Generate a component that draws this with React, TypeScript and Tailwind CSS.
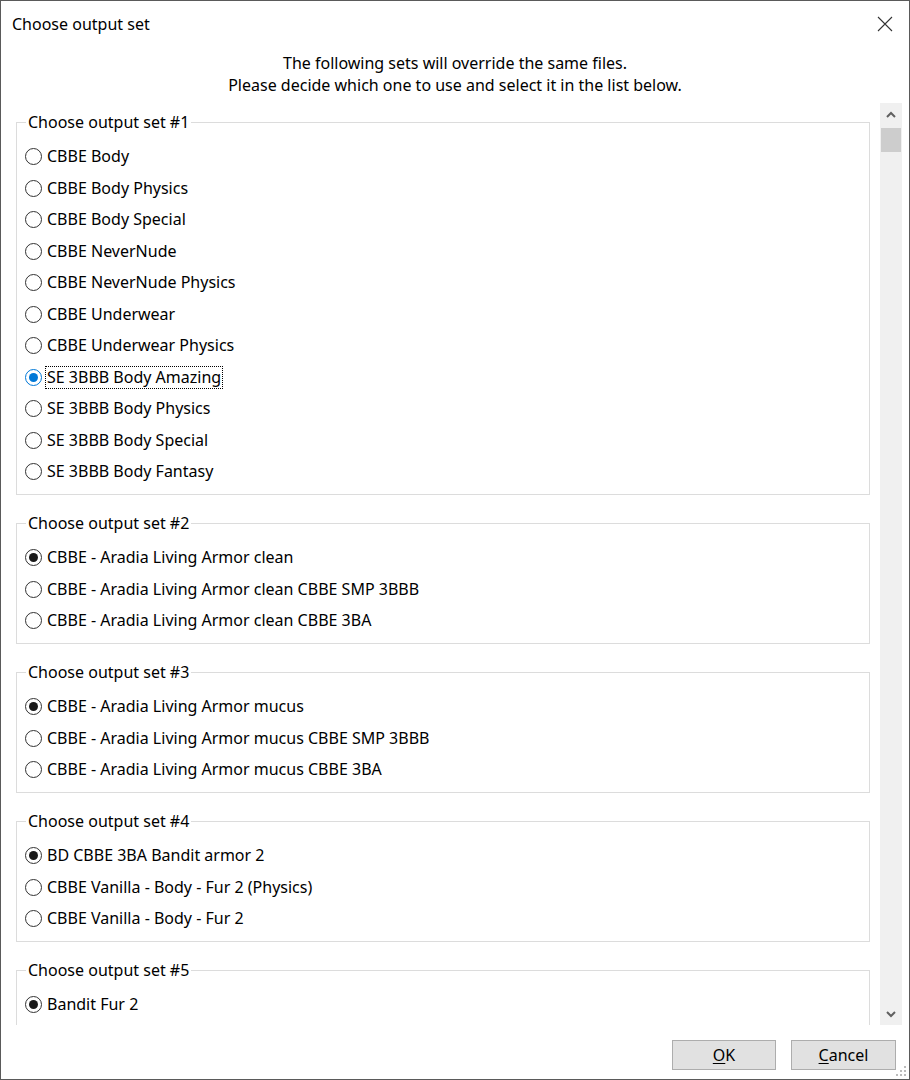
import React from "react";

type Group = { title: string; items: string[]; selected: number; focused?: boolean; tall?: boolean };

const groups: Group[] = [
  {
    title: "Choose output set #1",
    items: [
      "CBBE Body",
      "CBBE Body Physics",
      "CBBE Body Special",
      "CBBE NeverNude",
      "CBBE NeverNude Physics",
      "CBBE Underwear",
      "CBBE Underwear Physics",
      "SE 3BBB Body Amazing",
      "SE 3BBB Body Physics",
      "SE 3BBB Body Special",
      "SE 3BBB Body Fantasy",
    ],
    selected: 7,
    focused: true,
  },
  {
    title: "Choose output set #2",
    items: [
      "CBBE - Aradia Living Armor clean",
      "CBBE - Aradia Living Armor clean CBBE SMP 3BBB",
      "CBBE - Aradia Living Armor clean CBBE 3BA",
    ],
    selected: 0,
  },
  {
    title: "Choose output set #3",
    items: [
      "CBBE - Aradia Living Armor mucus",
      "CBBE - Aradia Living Armor mucus CBBE SMP 3BBB",
      "CBBE - Aradia Living Armor mucus CBBE 3BA",
    ],
    selected: 0,
  },
  {
    title: "Choose output set #4",
    items: ["BD CBBE 3BA Bandit armor 2", "CBBE Vanilla - Body - Fur 2 (Physics)", "CBBE Vanilla - Body - Fur 2"],
    selected: 0,
  },
  {
    title: "Choose output set #5",
    items: ["Bandit Fur 2"],
    selected: 0,
    tall: true,
  },
];

function Radio({ checked, focused }: { checked: boolean; focused?: boolean }) {
  if (checked && focused) {
    return (
      <span className="w-[17px] h-[17px] rounded-full border border-[#0078d7] flex items-center justify-center shrink-0">
        <span className="w-[9px] h-[9px] rounded-full bg-[#0078d7]" />
      </span>
    );
  }
  if (checked) {
    return (
      <span className="w-[17px] h-[17px] rounded-full border border-[#333333] flex items-center justify-center shrink-0">
        <span className="w-[9px] h-[9px] rounded-full bg-[#1a1a1a]" />
      </span>
    );
  }
  return <span className="w-[17px] h-[17px] rounded-full border border-[#333333] shrink-0" />;
}

function GroupBox({ g, first }: { g: Group; first?: boolean }) {
  return (
    <div
      className={`relative border border-[#dcdcdc] pt-[18px] pb-[6px] ${first ? "" : "mt-[28.5px]"} ${
        g.tall ? "min-h-[120px]" : ""
      }`}
    >
      <div className="absolute left-[9px] top-[-12px] bg-white px-[2px] leading-[22px] text-[#000]">{g.title}</div>
      {g.items.map((it, i) => {
        const sel = i === g.selected;
        const foc = sel && g.focused;
        return (
          <div key={i} className="h-[31.5px] flex items-center pl-[8px]">
            <Radio checked={sel} focused={foc} />
            <span
              className={`ml-[4px] leading-[21px] px-[1px] ${
                foc ? "outline outline-1 outline-dotted outline-[#000] outline-offset-0" : ""
              }`}
            >
              {it}
            </span>
          </div>
        );
      })}
    </div>
  );
}

export default function App() {
  return (
    <div
      className="w-[910px] h-[1080px] bg-white border border-[#5a5a5a] flex flex-col text-[16px] text-black overflow-hidden"
      style={{ fontFamily: '"Noto Sans", "Open Sans", sans-serif' }}
    >
      <div className="h-[45px] flex items-center justify-between pl-[11px] pr-[14px] shrink-0">
        <span className="leading-[20px]">Choose output set</span>
        <svg width="16" height="16" viewBox="0 0 16 16" className="mr-[2px]">
          <path d="M1 1 L15 15 M15 1 L1 15" stroke="#333" strokeWidth="1.1" fill="none" />
        </svg>
      </div>
      <div className="flex flex-col items-center leading-[22px] pt-[6px] shrink-0">
        <span>The following sets will override the same files.</span>
        <span>Please decide which one to use and select it in the list below.</span>
      </div>
      <div className="flex h-[922px] mt-[7px] ml-[7px] mr-[7px] shrink-0">
        <div className="flex-1 overflow-hidden pl-[8px] pr-[10px] pt-[19px]">
          {groups.map((g, i) => (
            <GroupBox key={i} g={g} first={i === 0} />
          ))}
        </div>
        <div className="w-[22px] bg-[#f0f0f0] flex flex-col items-center">
          <div className="h-[22px] w-full flex items-center justify-center">
            <svg width="10" height="7" viewBox="0 0 10 7">
              <path d="M1 6 L5 2 L9 6" stroke="#606060" strokeWidth="2" fill="none" />
            </svg>
          </div>
          <div className="mt-[3px] w-[20px] h-[24px] bg-[#cdcdcd]" />
          <div className="flex-1" />
          <div className="h-[22px] w-full flex items-center justify-center">
            <svg width="10" height="7" viewBox="0 0 10 7">
              <path d="M1 1 L5 5 L9 1" stroke="#606060" strokeWidth="2" fill="none" />
            </svg>
          </div>
        </div>
      </div>
      <div className="flex-1 relative flex justify-end items-start pt-[15px] pr-[13px] gap-[15px]">
        <button className="w-[104px] h-[30px] bg-[#e1e1e1] border border-[#adadad] leading-[20px]">
          <span className="underline underline-offset-2">O</span>K
        </button>
        <button className="w-[105px] h-[30px] bg-[#e1e1e1] border border-[#adadad] leading-[20px]">
          <span className="underline underline-offset-2">C</span>ancel
        </button>
        <svg width="12" height="12" viewBox="0 0 12 12" className="absolute right-[2px] bottom-[2px]">
          {[
            [10, 2],
            [10, 6],
            [6, 6],
            [10, 10],
            [6, 10],
            [2, 10],
          ].map(([x, y], i) => (
            <rect key={i} x={x - 1} y={y - 1} width="2" height="2" fill="#bcbcbc" />
          ))}
        </svg>
      </div>
    </div>
  );
}
